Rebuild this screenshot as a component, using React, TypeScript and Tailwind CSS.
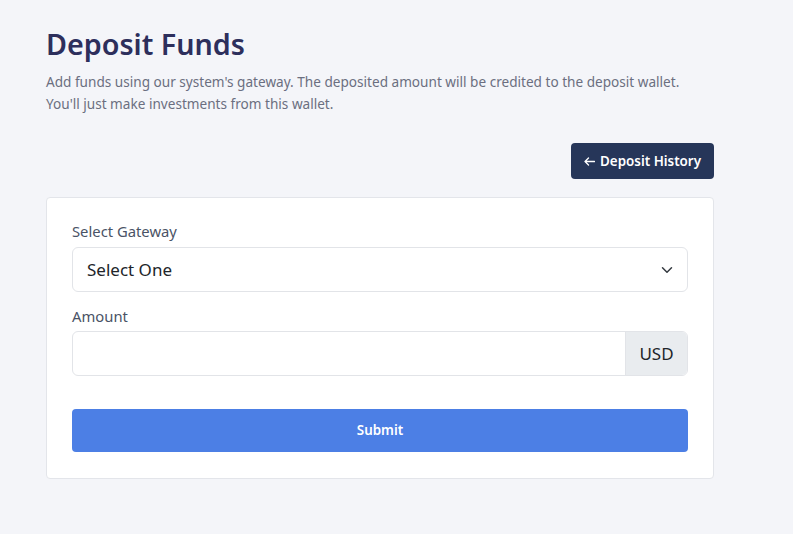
import React from 'react';

export default function App() {
  return (
    <div className="min-h-screen bg-[#f4f5f9] font-['Noto_Sans',sans-serif]">
      <div className="w-[668px] ml-[46px] pt-[26px]">
        <h1 className="text-[28.7px] leading-[36px] font-semibold text-[#2d2f5c]">Deposit Funds</h1>
        <p className="mt-[9px] text-[13.6px] leading-[22px] text-[#6b6f80]">
          Add funds using our system's gateway. The deposited amount will be credited to the deposit wallet.
          <br />
          You'll just make investments from this wallet.
        </p>

        <div className="flex justify-end mt-[28px]">
          <button className="h-[36px] px-[13px] rounded-[4px] bg-[#263659] text-white text-[13.4px] font-semibold flex items-center gap-[5px]">
            <svg width="11" height="9" viewBox="0 0 11 9" fill="none" stroke="white" strokeWidth="1.3" strokeLinecap="round" strokeLinejoin="round">
              <path d="M10.5 4.5H1M4.5 1L1 4.5l3.5 3.5" />
            </svg>
            Deposit History
          </button>
        </div>

        <div className="mt-[18px] bg-white border border-[#e3e5ea] rounded-[4px] px-[25px] pt-[23px] pb-[26px]">
          <label className="block text-[14.8px] leading-[20px] text-[#4a5366] mb-[6px]">Select Gateway</label>
          <div className="h-[45px] flex items-center justify-between border border-[#e2e4e8] rounded-[6px] pl-[14px] pr-[14px] text-[17px] text-[#212529]">
            <span>Select One</span>
            <svg width="12" height="12" viewBox="0 0 16 16" fill="none" stroke="#343a40" strokeWidth="2" strokeLinecap="round" strokeLinejoin="round">
              <path d="M2 5l6 6 6-6" />
            </svg>
          </div>

          <label className="block mt-[14px] text-[14.8px] leading-[20px] text-[#4a5366] mb-[5px]">Amount</label>
          <div className="h-[45px] flex border border-[#e2e4e8] rounded-[6px] overflow-hidden">
            <input className="flex-1 outline-none px-[14px]" type="text" />
            <span className="w-[62px] flex items-center justify-center bg-[#e9ecef] border-l border-[#e2e4e8] text-[17px] text-[#212529]">
              USD
            </span>
          </div>

          <button className="mt-[33px] w-full h-[43px] rounded-[4px] bg-[#4c7fe5] text-white text-[13.4px] font-semibold">
            Submit
          </button>
        </div>
      </div>
    </div>
  );
}
